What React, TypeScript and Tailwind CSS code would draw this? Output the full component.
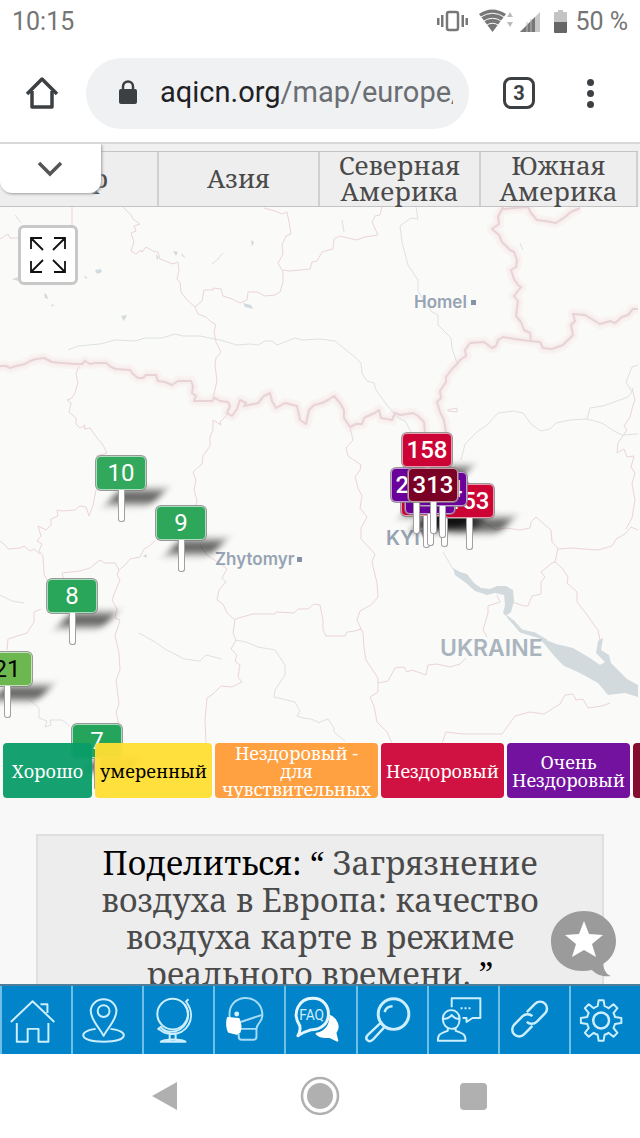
import type { ReactNode } from "react";

interface Pin {
  value: string;
  x: number;
  y: number; // bottom tip of the pin
  color: string;
  textColor?: string;
  bold?: boolean;
}

const tabs = ["Мир", "Азия", "Северная Америка", "Южная Америка"];

const pins: Pin[] = [
  { value: "10", x: 121, y: 315, color: "bg-[#32a85c]" },
  { value: "9", x: 181, y: 365, color: "bg-[#2fa75b]" },
  { value: "8", x: 72, y: 438, color: "bg-[#2aa65b]" },
  { value: "21", x: 7, y: 511, color: "bg-[#6cb74f]", textColor: "text-black" },
  { value: "7", x: 97, y: 583, color: "bg-[#25a55c]" },
  { value: "", x: 444, y: 340, color: "bg-[#cc0435]", bold: true },
  { value: "", x: 426, y: 341, color: "bg-[#cc0435]", bold: true },
  { value: "153", x: 469, y: 343, color: "bg-[#cc0435]", bold: true },
  { value: "", x: 430, y: 339, color: "bg-[#6a0099]", bold: true },
  { value: "224", x: 442, y: 331, color: "bg-[#6a0099]", bold: true },
  { value: "216", x: 416, y: 327, color: "bg-[#6a0099]", bold: true },
  { value: "158", x: 427, y: 292, color: "bg-[#cc0435]", bold: true },
  { value: "313", x: 433, y: 327, color: "bg-[#7b0025]", bold: true },
];

const legend = [
  { label: "Хорошо", style: "w-[89px] bg-[#0a9c68]/95 text-white" },
  { label: "умеренный", style: "w-[117px] bg-[#ffde33]/95 text-black" },
  { label: "Нездоровый - для чувствительных", style: "w-[163px] px-1 bg-[#ff9b37]/95 text-white" },
  { label: "Нездоровый", style: "w-[123px] bg-[#cc0537]/95 text-white" },
  { label: "Очень Нездоровый", style: "w-[123px] bg-[#6a0599]/95 text-white" },
  { label: "", style: "w-[96px] bg-[#7e0023]/95 text-white" },
];

const countryBorders = [
  "M0 366 L6 366 10 368 16 366 25 364 30 361 36 359 44 358 52 362 62 363 75 364 82 364 85 361 90 364 95 363 106 363 111 367 116 369 130 370 133 374 138 378 143 378 146 375 156 375 158 381 165 382 172 385 178 381 191 381 193 386 192 393 196 396 194 401 212 401 215 398 220 401 228 402 230 406 227 413 232 416 237 409 240 400 246 403 244 406 258 403 264 396 270 393 272 401 276 408 285 403 297 406 300 420 306 424 309 410 314 405 322 403 328 400 334 396 340 403 344 410 344 418 350 427 356 424 362 424 364 418 370 415 375 413 379 410 381 418 392 420 395 413 400 415 407 414 413 413 418 416 424 422 425 435",
  "M446 433 L444 420 440 412 437 402 441 398 440 391 446 382 446 377 452 369 457 364 460 360 466 356 465 350 470 343 484 342 492 348 496 346 498 340 503 337 515 339 530 341 540 342 543 348 552 349 563 345 569 339 573 335 571 325 575 321 573 314 585 315 590 318 600 324 610 321 615 323 622 317 628 315 633 309 638 309",
  "M503 207 L498 217 499 224 492 229 499 235 502 242 510 250 514 252 517 260 516 267 511 270 514 279 518 285 521 287 514 296 518 301 516 316 521 322 524 330 530 333 531 341",
  "M503 209 L528 207 531 213 537 220 545 221 556 223 565 217 571 212 580 208",
];

const regionBorders = [
  "M72 207 V227 M0 239 L8 234 10 238 20 238",
  "M123 207 L131 215 133 219 140 224 134 226 136 231 131 233 134 242 131 251 136 254 141 250 142 252 146 247 153 251 158 252 160 259 173 264 178 262 179 270 177 279 180 282 181 292 187 300 195 307 202 301 204 290 213 290 213 288 221 289 223 296 232 299 240 303 247 300 248 292 257 292 265 296 275 295 280 292 283 282 283 272 278 263 283 254 282 245 286 236 291 234 289 222 287 212 282 214 275 211 264 208",
  "M283 270 L290 271 310 269 312 262 317 261 322 252 333 249 334 239 340 236 356 240 365 237 378 235 372 222 375 216 380 215 382 207",
  "M195 307 L198 314 206 317 210 321 216 325 214 331 216 342 221 352 216 358 215 365 217 381 213 398",
  "M79 366 L76 374 78 382 75 393 72 398 67 400 71 403 69 412 76 418 76 424 80 428 85 425 84 429 90 428 97 438 103 445 107 453 96 456 M96 490 L93 505 89 516 86 507 80 506 75 510 62 511 57 510 58 516 51 519 51 525 46 530 38 526 41 536 37 541 42 544 39 551 43 556 44 574 47 580 M0 541 L5 545 8 549 20 548 24 546 30 551 34 549 40 554",
  "M228 414 L220 422 221 425 213 420 213 430 210 437 210 446 203 456 202 464 193 472 196 480 194 490 197 500 196 507",
  "M155 541 L148 547 144 549 140 557 130 559 125 565 119 570 115 563 105 563 100 560 90 568 80 571 62 573 64 581 M41 609 L34 612 34 622 27 633 8 639 7 650",
  "M119 570 L117 575 120 580 115 592 112 600 117 609 115 618 120 620 115 636 119 653 120 670 116 680 119 704 116 712 119 725",
  "M200 545 L207 555 222 565 227 569 222 578 226 582 219 590 217 600 223 604 227 613 235 620 233 633 236 640 231 649 237 655 235 661 240 665 238 677 242 682 232 687 221 686 213 694 207 698 205 720 206 743",
  "M235 619 L253 614 275 614 276 612 294 613 298 609 308 609 314 604 320 605 323 620 323 630 326 636 345 636 347 632 355 631 361 629",
  "M350 427 L353 440 346 448 348 456 361 465 360 470 355 477 358 488 362 496 360 508 367 517 361 528 361 539 375 554 372 562 377 583 378 597 371 605 360 611 357 620 363 633 364 648 366 660 378 678 378 692 370 697 374 706 377 722 387 732 392 743",
  "M378 683 L388 681 395 668 404 667 407 672 412 670 426 675 428 665 437 664 450 667 460 664 466 658",
  "M487 637 L483 630 488 613 488 606 500 602 497 595",
  "M512 602 L524 606 528 606 532 596 541 594 541 582 545 577 541 572 552 563 555 562 558 548 552 542 551 530 545 525 536 517 531 522 530 528 520 530 506 528 496 530 480 520",
  "M555 562 L562 568 568 577 567 583 577 592 577 602 588 616 594 625 598 630 600 640",
  "M558 549 L571 548 584 549 598 550 612 546 616 539 625 534 631 527 638 530 M626 529 L632 518 635 500 632 484 635 473 631 467 634 456 627 457 624 449 617 453 618 443 627 430 624 426 630 417 633 405 635 400 632 388",
  "M442 743 L446 732 462 734 502 734 515 716 530 712 544 714 560 704 565 695 573 694 576 700 583 699 588 708 602 706 610 703",
  "M447 410 L457 408 457 412 448 411",
];

const rivers = [
  "M68 350 L78 346 100 344 115 340 135 341 145 338 162 338 175 334 183 336 200 336 220 340 237 345 250 344 258 345 265 341 272 341 277 345 295 338 302 340 320 339 335 341 346 350 356 358 361 363 362 373 367 381 374 383 376 390 387 405 397 417 406 422 412 434",
  "M416 207 L418 219 411 218 400 226 402 242 408 265 418 280 418 291 424 301 432 312 438 315 438 325 451 338 452 348 457 363",
  "M461 460 L465 444 478 431 487 425 498 413 513 411 523 413 531 424 541 431 550 429 556 423 570 420 587 419 602 423 614 431 622 435 638 434",
  "M587 419 L590 408 603 406 617 401 628 397 632 392 626 382 632 367 638 365",
  "M139 633 L155 642 165 649 184 659 200 661 206 655 222 659",
  "M235 640 L246 642 258 647 275 650 285 665 285 675 275 690 274 697 295 702 300 711 297 716 303 718 311 719 320 723",
  "M0 595 L12 601 24 603",
  "M30 700 L39 708 39 718 47 721 45 727 51 725 50 720 62 720 70 726",
  "M320 722 L328 719 334 728 334 732 345 741",
  "M443 552 L453 569",
];

function MapDrawing() {
  return (
    <svg viewBox="0 207 640 591" preserveAspectRatio="xMinYMin slice" className="block h-full w-full" fill="none" strokeLinejoin="round">
      <g stroke="#f9f4f3" strokeWidth="11">
        {countryBorders.map((d) => <path key={d} d={d} />)}
      </g>
      <g stroke="#f7eeee" strokeWidth="6">
        {countryBorders.map((d) => <path key={d} d={d} />)}
      </g>
      <g stroke="#e8d2d6" strokeWidth="2">
        {countryBorders.map((d) => <path key={d} d={d} />)}
      </g>
      <g stroke="#ebd5d9" strokeWidth="1">
        {regionBorders.map((d) => <path key={d} d={d} />)}
      </g>
      <g stroke="#dce2e4" strokeWidth="1">
        {rivers.map((d) => <path key={d} d={d} />)}
      </g>
      {/* Dnipro reservoirs */}
      <g fill="#d3dadd">
        <path d="M453 568 L460 572 467 574 474 583 481 588 490 589 497 586 506 586 513 590 514 601 511 612 506 616 503 613 505 605 504 595 495 593 487 595 475 591 466 583 455 575Z" />
        <path d="M507 616 L514 621 522 630 535 633 547 640 540 638 520 632 508 618Z" stroke="#d3dadd" />
        <path d="M537 635 L546 640 556 644 573 648 590 658 600 665 605 662 596 653 598 641 603 638 601 650 609 655 611 663 627 679 638 685 638 697 625 693 608 695 598 683 578 672 564 666 556 658 546 646Z" />
      </g>
      <g fill="#d3dadd">
        <path d="M173 251 l5 1 -2 4z M181 253 l5 5 -4-2z M95 270 l6-1 1 3 -5 2z M44 293 l3 2 1 4 -3-1z M51 305 l3-1 -2 3z M121 316 l6-1 -3 6z M243 303 l8 2 2 4 -8-2z M251 240 l3 2 -2 5z M156 254 l3 4 -2 2z M84 276 l3 1 -1 2z M12 279 l7-2 -1 4z M143 556 l4-2 -1 4z" />
      </g>
      <path d="M212 264 L218 259 223 253 M520 243 L523 250 M15 215 L21 223 M342 220 L344 232" stroke="#dde1e2" />
      <rect x="471" y="300" width="5" height="5" fill="#8493a8" />
      <rect x="297" y="557" width="5" height="5" fill="#8493a8" />
    </svg>
  );
}

function MapPin({ pin }: { pin: Pin }) {
  return (
    <div className="absolute flex -translate-x-1/2 -translate-y-full flex-col items-center" style={{ left: pin.x, top: pin.y }}>
      <div className={`flex h-[34px] w-[50px] items-center justify-center overflow-hidden rounded-[5px] border border-white/60 text-2xl ring-1 ring-[#808080]/80 ${pin.color} ${pin.textColor ?? "text-white"} ${pin.bold ? "font-medium" : ""}`}>
        {pin.value}
      </div>
      <div className="h-8 w-[7px] rounded-b-[3px] border-x border-b border-[#a0a0a0] bg-white" />
    </div>
  );
}

function NavIcon({ children }: { children: ReactNode }) {
  return (
    <svg viewBox="0 0 70 68" className="h-[68px] w-[70px]" fill="none" stroke="#cdeffd" strokeWidth="2" strokeLinejoin="round">
      {children}
    </svg>
  );
}

const gearPath =
  "M27 20 L28 14 H33 L34 20 A14 14 0 0 1 38 22 L43 18 L47 22 L43 27 A14 14 0 0 1 44.500 31 L51 32 V37 L44.500 38 A14 14 0 0 1 43 42 L47 47 L43 51 L38 47 A14 14 0 0 1 34 49 L33 55 H28 L27 49 A14 14 0 0 1 23 47 L18 51 L14 47 L18 42 A14 14 0 0 1 16.500 38 L10 37 V32 L16.500 31 A14 14 0 0 1 18 27 L14 22 L18 18 L23 22 A14 14 0 0 1 27 20Z";

const navItems = [
  {
    label: "Главная",
    icon: <path d="M9 36 L31 15 53 36 M15 37 V56 H26 V43 H37 V56 H47 V37 M39 18 H46 V27" />,
  },
  {
    label: "Местоположение",
    icon: (
      <>
        <path d="M31 50 C27 42 18 34 18 25 A13 12 0 0 1 44 25 C44 34 35 42 31 50Z" />
        <circle cx="31" cy="25" r="6" />
        <path d="M23 43 C5 45 5 56 31 56 S57 45 38 43" />
      </>
    ),
  },
  {
    label: "Карта",
    icon: (
      <>
        <circle cx="29" cy="28" r="15.500" />
        <path d="M42 16 L45 13 M43 16 C54 31 44 50 26 48 C21 48 17 45 14 42 M41 18 C50 31 41 46 27 46 C22 46 19 44 17 41 L14 44 M26 49 V53 M32 49 V53 M17 56 C20 53 39 53 42 56Z" />
      </>
    ),
  },
  {
    label: "Маска",
    icon: (
      <>
        <path d="M15 32 C11 6 48 5 48 29 C48 37 42 37 42 43 V51 Q42 54 39 54 H27 Q24 54 24 51 V48 M26 36 L47 29 M26 43 H42" stroke="#a5dcf6" />
        <path d="M13 32 L24 33 Q27 40 25 46 L22 48 14 46 Q11 39 13 32Z" fill="white" stroke="white" />
        <circle cx="22" cy="28" r="1.500" fill="white" />
      </>
    ),
  },
  {
    label: "FAQ",
    icon: (
      <>
        <path d="M45 30 C51 33 55 41 50 47 L52 55 L44 51 C38 52 34 51 31 48 C40 46 45 40 45 30Z" fill="white" stroke="white" />
        <path d="M14 40 C5 26 14 12 27 12 C38 12 43 20 43 28 C43 38 35 44 25 44 Q18 46 12 50 Q15 45 14 40Z" strokeWidth="3" stroke="#e6f7ff" />
        <text x="26" y="34" textAnchor="middle" fontSize="14" fontFamily="Roboto, sans-serif" fill="#cdeffd" stroke="none">FAQ</text>
      </>
    ),
  },
  {
    label: "Поиск",
    icon: (
      <>
        <circle cx="36" cy="28" r="15.500" strokeWidth="3" />
        <path d="M23 37 L10 49 C6 53 11 58 15 54 L27 41 M27 26 C28 22 31 20 35 20" strokeWidth="2.500" />
      </>
    ),
  },
  {
    label: "Контакты",
    icon: (
      <>
        <path d="M23 21 V12 H52 V32 H44 L38 36 V32 H34" />
        <path d="M32 22 h2 M36 22 h2 M40 22 h2" />
        <path d="M14 33 C14 21 31 21 31 33 C31 39 28 43 23 43 S14 39 14 33Z M14 33 C20 33 21 31 23 29 C26 33 29 33 31 33 M19 42 V45 C10 48 9 49 9 55 H37 C37 49 36 48 27 45 V42" />
      </>
    ),
  },
  {
    label: "Ссылки",
    icon: (
      <g transform="rotate(-45 30 33)" strokeWidth="2.500">
        <path d="M33 26 H45 a7 7 0 0 1 0 14 H33 a7 7 0 0 1 -7 -7" />
        <path d="M27 40 H15 a7 7 0 0 1 0 -14 H27 a7 7 0 0 1 7 7" />
      </g>
    ),
  },
  {
    label: "Настройки",
    icon: (
      <>
        <path d={gearPath} />
        <circle cx="30.500" cy="34.500" r="8" strokeWidth="2.500" />
      </>
    ),
  },
];

function StatusBar() {
  return (
    <div className="flex h-11 items-center justify-between px-3 text-[25px] text-[#757575]">
      <span>10:15</span>
      <div className="flex items-center gap-2">
        <svg width="109" height="26" viewBox="0 0 109 26" fill="#777">
          <rect x="10" y="3" width="11" height="18" rx="2" fill="none" stroke="#777" strokeWidth="2.500" />
          <path d="M0 9h2.500v7H0zM4 6h2.500v12H4zM24.500 6h2.500v12h-2.500zM28.500 9h2.500v7h-2.500z" />
          <path d="M42 5 Q55 -4 69 5 L55.500 23Z" />
          <path d="M43 8.500 Q55.500 0 68 8.500 M46 12.500 Q55.500 6 65 12.500 M49 16.500 Q55.500 12 62 16.500" fill="none" stroke="white" strokeWidth="1" />
          <path d="M73 3 l3 5 h-6z M73 18 l3-5 h-6z" fill="#bbb" />
          <path d="M83 23 L103 3 V23Z" fill="#c8c8c8" />
          <path d="M83 23 L98 8 V23Z" />
          <path d="M90 13v10M94 10v13" stroke="#bbb" />
        </svg>
        <svg width="13" height="24" viewBox="0 0 13 24">
          <path d="M4 0h5v2h3q1 0 1 1v9H0V3q0-1 1-1h3z" fill="#c4c4c4" />
          <path d="M0 12h13v10q0 1-1 1H1q-1 0-1-1z" fill="#666" />
        </svg>
        <span>50 %</span>
      </div>
    </div>
  );
}

function BrowserBar() {
  return (
    <div className="flex h-[98px] items-center pr-[38px] pl-6">
      <button aria-label="Домой" className="flex w-9 justify-center">
        <svg width="34" height="34" viewBox="0 0 34 34" fill="none" stroke="#3c4043" strokeWidth="3.500">
          <path d="M2 18 L17 3 32 18 M7 15 V31 H27 V15" strokeLinejoin="round" />
        </svg>
      </button>
      <div className="ml-[26px] flex h-[71px] min-w-0 flex-1 items-center rounded-full bg-[#f0f1f3] pr-4 pl-8">
        <svg width="20" height="26" viewBox="0 0 20 26" className="mr-[22px] shrink-0">
          <path d="M5 10 V6.500 A5 5 0 0 1 15 6.500 V10" fill="none" stroke="#3c4043" strokeWidth="2.500" />
          <rect x="1" y="9" width="18" height="15" rx="2" fill="#3c4043" />
        </svg>
        <a href="#map" className="overflow-hidden text-[29px] whitespace-nowrap text-[#6b6e72]">
          <span className="text-[#202124]">aqicn.org</span>/map/europe/
        </a>
      </div>
      <button aria-label="Вкладки" className="ml-[34px] flex size-8 items-center justify-center rounded-lg border-[3px] border-[#3c4043] text-xl font-bold text-[#3c4043]">
        3
      </button>
      <button aria-label="Меню" className="ml-[43px] flex w-6 flex-col items-center gap-1">
        <span className="size-[7px] rounded-full bg-[#3c4043]" />
        <span className="size-[7px] rounded-full bg-[#3c4043]" />
        <span className="size-[7px] rounded-full bg-[#3c4043]" />
      </button>
    </div>
  );
}

export default function App() {
  return (
    <div className="flex h-screen flex-col overflow-hidden bg-white font-[Roboto,sans-serif]">
      <StatusBar />
      <BrowserBar />

      <main className="relative min-h-0 flex-1 overflow-hidden border-t-2 border-[#d8d8d8] bg-[#f8f8f8] font-['Noto_Serif','DejaVu_Serif',serif]">
        <div className="bg-[#f0f0f0] pt-[7px] pr-[2px]">
          <div className="grid h-14 grid-cols-[159fr_161fr_161fr_157fr] border-y border-[#c4c4c4] bg-[#eeeeee]">
            {tabs.map((tab) => (
              <a key={tab} href="#map" className="flex items-center justify-center border-r-2 border-[#d0d0d0] px-3 pb-[2px] text-center text-[26px] leading-[26px] text-[#4a4a4a]">
                {tab}
              </a>
            ))}
          </div>
        </div>
        <button aria-label="Развернуть" className="absolute top-0 left-0 flex h-[49px] w-[101px] items-center justify-center rounded-b-xl bg-white shadow-[1px_1px_3px_#999]">
          <svg width="28" height="18" viewBox="0 0 28 18" fill="none" stroke="#555" strokeWidth="3.500">
            <path d="M2 3 L13 14 24 3" />
          </svg>
        </button>

        <section id="map" className="relative h-[591px] overflow-hidden bg-[#fafaf8] font-[Roboto,sans-serif]">
          <MapDrawing />
          <div className="absolute top-[83px] left-[414px] font-[Inter,sans-serif] text-[17px] font-semibold text-[#96a3b4]">Homel</div>
          <div className="absolute top-[340px] left-[215px] font-[Inter,sans-serif] text-[17px] font-semibold text-[#96a3b4]">Zhytomyr</div>
          <div className="absolute top-[317px] left-[386px] font-[Inter,sans-serif] text-xl font-semibold text-[#96a3b4]">KYIV</div>
          <div className="absolute top-[424px] left-[440px] font-[Inter,sans-serif] text-[23px] font-semibold text-[#a9b4bf]">UKRAINE</div>

          {pins.map((pin) => (
            <div
              key={`${pin.x}-${pin.y}`}
              className="absolute h-[14px] w-[46px] -skew-x-[40deg] bg-black/60 blur-[4px]"
              style={{ left: pin.x - 8, top: pin.y - 32 }}
            />
          ))}
          {pins.map((pin) => (
            <MapPin key={`${pin.x}-${pin.y}`} pin={pin} />
          ))}

          <button aria-label="На весь экран" className="absolute top-[18px] left-[18px] flex size-[60px] items-center justify-center rounded-md border-[3px] border-[#c8c8c8] bg-white">
            <svg width="38" height="38" viewBox="0 0 38 38" fill="none" stroke="#111" strokeWidth="1.800">
              <path d="M2 13 V2 H13 M2 2 L14 14 M25 2 H36 V13 M36 2 L24 14 M2 25 V36 H13 M2 36 L14 24 M36 25 V36 H25 M36 36 L24 24" />
            </svg>
          </button>

          <ul className="absolute right-0 bottom-0 left-0 flex gap-[3px] overflow-hidden pl-[3px] font-['Noto_Serif','DejaVu_Serif',serif]">
            {legend.map((item) => (
              <li key={item.style} className={`flex h-[55px] shrink-0 items-center justify-center overflow-hidden rounded text-center text-lg leading-[18px] ${item.style}`}>
                {item.label}
              </li>
            ))}
          </ul>
        </section>

        <section className="mx-9 mt-9 border-2 border-[#dfdfdf] bg-[#ededed] px-10 pt-2 pb-10 text-center text-[32px] leading-[37px] text-black">
          Поделиться: “ <a href="#share" className="text-[#4a4a4a]">Загрязнение воздуха в Европа: качество воздуха карте в режиме реального времени.</a> ”
        </section>

        <button aria-label="Отзыв" className="absolute right-[22px] bottom-[6px]">
          <svg width="68" height="68" viewBox="0 0 68 68">
            <path d="M34 1 C52 1 66 14 66 31 C66 42 60 50 53 54 C54 60 56 64 61 66 C52 67 47 65 42 60 C18 65 1 51 1 31 C1 14 16 1 34 1Z" fill="#9b9b9b" />
            <path d="M34 11 L39 24 53 25 42 34 46 47 34 40 22 47 26 34 15 25 29 24Z" fill="white" />
          </svg>
        </button>
      </main>

      <nav className="grid shrink-0 grid-cols-9 border-t-2 border-[#4d7f9c] bg-[#0284cb]">
        {navItems.map((item) => (
          <a key={item.label} href="#map" aria-label={item.label} className="flex justify-center border-l-2 border-[#6fbfe6]">
            <NavIcon>{item.icon}</NavIcon>
          </a>
        ))}
      </nav>

      <div className="grid h-[84px] shrink-0 grid-cols-[90px_153px_154px_153px_90px] items-center justify-center">
        <button aria-label="Назад" className="col-start-2 flex justify-start">
          <svg width="130" height="30" viewBox="0 0 130 30" fill="#b0b0b0">
            <path d="M62 15 L87 1 V29Z" />
          </svg>
        </button>
        <button aria-label="Главный экран" className="flex justify-center">
          <svg width="40" height="40" viewBox="0 0 40 40" fill="#b0b0b0">
            <circle cx="20" cy="20" r="18" fill="none" stroke="#b0b0b0" strokeWidth="2.500" />
            <circle cx="20" cy="20" r="13" />
          </svg>
        </button>
        <button aria-label="Недавние" className="flex justify-center">
          <span className="size-[27px] rounded-sm bg-[#b0b0b0]" />
        </button>
      </div>
    </div>
  );
}
